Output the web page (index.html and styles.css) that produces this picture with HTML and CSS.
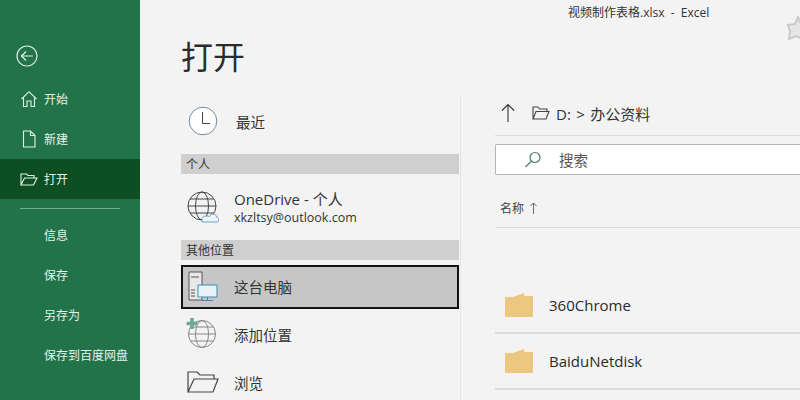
FILE: index.html
```html
<!DOCTYPE html>
<html lang="zh-CN">
<head>
<meta charset="utf-8">
<title>打开</title>
<link rel="stylesheet" href="styles.css">
</head>
<body>
<div class="app">
  <nav class="sidebar">
    <div class="back">
      <svg width="24" height="24" viewBox="0 0 24 24" fill="none" stroke="#dff0e6" stroke-width="1.2"><circle cx="12" cy="12" r="10"/><path d="M18 12H6.500M11 7.500 6.500 12l4.500 4.500"/></svg>
    </div>
    <a class="nav-item">
      <svg class="nav-icon" width="18" height="18" viewBox="0 0 18 18" fill="none" stroke="#dff0e6" stroke-width="1.1"><path d="M1.500 9 9 1.700 16.500 9M3.500 7.500V16.500H7V11H11V16.500H14.500V7.500"/></svg>
      <span>开始</span>
    </a>
    <a class="nav-item">
      <svg class="nav-icon" width="18" height="18" viewBox="0 0 18 18" fill="none" stroke="#dff0e6" stroke-width="1.1"><path d="M3.500 1H10.500L15 5.500V17H3.500ZM10.500 1V5.500H15"/></svg>
      <span>新建</span>
    </a>
    <a class="nav-item active">
      <svg class="nav-icon" width="18" height="18" viewBox="0 0 18 18" fill="none" stroke="#dff0e6" stroke-width="1.1"><path d="M1 15V4H6.500L8 5.500H14V8M1 15H13.500L17 8H4.500Z"/></svg>
      <span>打开</span>
    </a>
    <div class="nav-divider"></div>
    <a class="nav-item"><span class="nav-text">信息</span></a>
    <a class="nav-item"><span class="nav-text">保存</span></a>
    <a class="nav-item"><span class="nav-text">另存为</span></a>
    <a class="nav-item"><span class="nav-text">保存到百度网盘</span></a>
  </nav>

  <section class="left">
    <h1 class="title">打开</h1>
    <div class="places">
      <div class="place recent">
        <svg class="place-icon" width="30" height="30" viewBox="0 0 30 30" fill="#fff" stroke="#6f8d99" stroke-width="1"><circle cx="15" cy="15" r="13.800"/><path d="M14.500 6V17.500H22" fill="none" stroke="#444"/></svg>
        <span class="place-name">最近</span>
      </div>
      <div class="band">个人</div>
      <div class="place onedrive">
        <svg class="place-icon" width="32" height="32" viewBox="0 0 32 32" fill="none" stroke="#444" stroke-width="1"><circle cx="15" cy="15" r="14"/><ellipse cx="15" cy="15" rx="6.500" ry="14"/><path d="M1 15H29M3 8H27M3 22H27"/><path d="M15 31H30C32.500 31 32.500 26 29.500 26 29 22.500 24 22 22.500 25.500 19 24.500 15 25 15 28.500 15 30 15 31 15 31Z" fill="#f3f3f3" stroke="#5ba5c9"/></svg>
        <div class="place-text">
          <span class="place-main">OneDrive - 个人</span>
          <span class="place-sub">xkzltsy@outlook.com</span>
        </div>
      </div>
      <div class="band">其他位置</div>
      <div class="place selected">
        <svg class="place-icon" width="32" height="32" viewBox="0 0 32 32" fill="none" stroke-width="1"><path d="M2 1H15V29H2ZM4 6H12M4 19H8M4 22H8M4 25H8" stroke="#555" fill="#e8e8e8"/><path d="M11 14H30V26H11Z" fill="#e9f2f7" stroke="#3d8db5"/><path d="M20.500 26V29M15 29.500H26" stroke="#3d8db5"/></svg>
        <span class="place-name">这台电脑</span>
      </div>
      <div class="place add">
        <svg class="place-icon" width="32" height="32" viewBox="0 0 32 32" fill="none" stroke="#888" stroke-width="1"><circle cx="16" cy="16" r="13.500"/><ellipse cx="16" cy="16" rx="6.500" ry="13.500"/><path d="M2.500 16H29.500M4.500 9H27.500M4.500 23H27.500"/><path d="M6 0V11M0.500 5.500H11.500" stroke="#6fa893" stroke-width="3.600"/></svg>
        <span class="place-name">添加位置</span>
      </div>
      <div class="place browse">
        <svg class="place-icon" width="32" height="24" viewBox="0 0 32 24" fill="none" stroke="#444" stroke-width="1.200"><path d="M1 22V2H10L13 5H27V9M1 22H26L31 9H7Z"/></svg>
        <span class="place-name">浏览</span>
      </div>
    </div>
  </section>

  <section class="right">
    <div class="doc-title">视频制作表格.xlsx &nbsp;-&nbsp; Excel</div>
    <svg class="star" width="24" height="26" viewBox="0 0 24 26" fill="#e6e6e6" stroke="#c9c9c9" stroke-width="2"><path d="M12 1 15 8 22 9 17 15 18 24 10 20 3 23 4 15 2 9 9 8Z"/></svg>
    <div class="path">
      <svg class="up" width="14" height="20" viewBox="0 0 14 20" fill="none" stroke="#333" stroke-width="1.100"><path d="M7 19V1.500M1 7.500 7 1.500 13 7.500"/></svg>
      <svg class="path-folder" width="18" height="14" viewBox="0 0 18 14" fill="none" stroke="#444" stroke-width="1.100"><path d="M1 13V1H6L7.500 3H15V5.500M1 13H14L17 5.500H4Z"/></svg>
      <span class="crumb">D: &gt; 办公资料</span>
    </div>
    <div class="search">
      <svg width="18" height="18" viewBox="0 0 18 18" fill="none" stroke-width="1.200"><circle cx="11" cy="6.500" r="5" stroke="#4f7f68"/><path d="M7.500 10 1.500 16" stroke="#4f7f68"/></svg>
      <span>搜索</span>
    </div>
    <div class="col-head">
      <span>名称</span>
      <svg width="7" height="12" viewBox="0 0 7 12" fill="none" stroke="#666" stroke-width="1"><path d="M3.500 12V1M0.500 4 3.500 1 6.500 4"/></svg>
    </div>
    <div class="files">
      <div class="file">
        <svg width="28" height="24" viewBox="0 0 28 24" class="folder"><path d="M19 0H27V3H19Z" fill="#fbf3df"/><path d="M0 4 8 4 19 0 19 3H28V24H0Z" fill="#ecc77f"/></svg>
        <span>360Chrome</span>
      </div>
      <div class="file">
        <svg width="28" height="24" viewBox="0 0 28 24" class="folder"><path d="M19 0H27V3H19Z" fill="#fbf3df"/><path d="M0 4 8 4 19 0 19 3H28V24H0Z" fill="#ecc77f"/></svg>
        <span>BaiduNetdisk</span>
      </div>
    </div>
  </section>
</div>
</body>
</html>
```

FILE: styles.css
```css
* { box-sizing: border-box; }
html, body { margin: 0; padding: 0; }
body {
  width: 800px;
  height: 400px;
  overflow: hidden;
  font-family: "Open Sans", "Noto Sans CJK SC", sans-serif;
  color: #333;
  background: #f3f3f3;
}
.app { display: flex; width: 800px; height: 400px; overflow: hidden; }

.sidebar {
  flex: none;
  width: 140px;
  height: 400px;
  background: #22734a;
  color: #e6f2ea;
  padding-top: 44px;
  font-size: 12px;
}
.back { height: 35px; padding-left: 15px; }
.nav-item { display: flex; align-items: center; height: 40px; padding-left: 20px; gap: 6px; }
.nav-item.active { background: #0d4f22; }
.nav-icon { flex: none; }
.nav-text { padding-left: 24px; }
.nav-divider { height: 1px; margin: 9px 20px 6px; background: #6fb38c; }

.left { flex: none; width: 320px; padding-left: 41px; }
.title { margin: 34px 0 0; height: 62px; font-size: 32px; line-height: 46px; font-weight: 400; color: #2b2b2b; }
.places { width: 278px; height: 304px; position: relative; }
.places::after { content: ""; position: absolute; top: 0; bottom: 0; left: 279px; width: 1px; background: #e4e4e4; }
.band { height: 20px; line-height: 21px; background: #cfcfcf; padding-left: 5px; font-size: 12px; color: #333; }
.place { display: flex; align-items: center; font-size: 14.500px; padding-left: 6px; }
.place-icon { flex: none; }
.place-name { margin-left: 21px; }
.recent { height: 58px; padding-bottom: 8px; padding-left: 7px; }
.recent .place-name { margin-left: 18px; }
.onedrive { height: 66px; }
.place-text { display: flex; flex-direction: column; margin-left: 15px; }
.place-main { font-size: 15px; line-height: 20px; }
.place-sub { font-size: 12.500px; line-height: 17px; }
.selected { height: 44px; margin-top: 5px; border: 2px solid #111; background: #c6c6c6; padding: 0 0 1px 4px; }
.selected .place-name { margin-left: 15px; }
.add { height: 52px; padding: 0 0 2px 5px; }
.add .place-name { margin-left: 16px; }
.browse { height: 44px; padding-bottom: 2px; }
.browse .place-name { margin-left: 15px; }

.right { flex: 1; position: relative; min-width: 0; padding-left: 35px; }
.doc-title { height: 25px; padding-left: 73px; font-size: 12px; line-height: 26px; white-space: nowrap; color: #333; }
.star { position: absolute; top: 16px; left: 326px; }
.path { display: flex; align-items: center; height: 43px; margin-top: 68px; padding: 0 0 2px 6px; font-size: 15px; border-bottom: 1px solid #dcdcdc; }
.crumb { word-spacing: 1.500px; }
.up { flex: none; }
.path-folder { margin-left: 17px; margin-right: 6px; flex: none; }
.search {
  display: flex;
  align-items: center;
  gap: 17px;
  height: 31px;
  margin-top: 8px;
  padding-left: 28px;
  background: #fff;
  border: 1px solid #b5b5b5;
  border-right: 0;
  border-radius: 2px 0 0 2px;
  font-size: 14.500px;
  color: #555;
}
.col-head { display: flex; align-items: center; gap: 6px; height: 53px; padding: 13px 0 0 5px; font-size: 12px; color: #444; border-bottom: 1px solid #dcdcdc; }
.files { margin-top: 50px; }
.file { display: flex; align-items: center; height: 56px; padding-left: 10px; gap: 16px; font-size: 15px; border-bottom: 2px solid #dcdcdc; color: #2b2b2b; }
.folder { flex: none; }
```
